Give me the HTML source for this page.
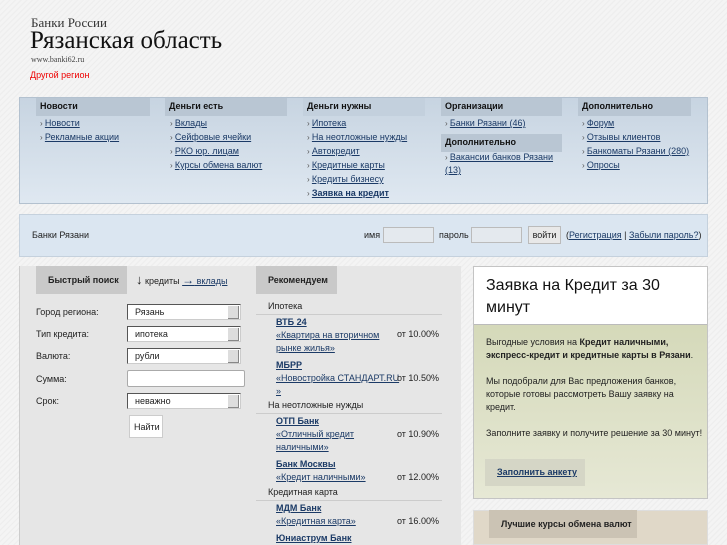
<!DOCTYPE html>
<html><head><meta charset="utf-8"><style>
*{margin:0;padding:0;box-sizing:border-box}
body{width:727px;height:545px;overflow:hidden;position:relative;font-family:"Liberation Sans","DejaVu Sans",sans-serif;font-size:9px;color:#222;
background:repeating-linear-gradient(135deg,#f4f4f4 0,#f4f4f4 2px,#ececec 3px,#f4f4f4 4px);}
.a{position:absolute}
a{color:#1b3a66;text-decoration:underline}
.h{position:absolute;top:98px;height:18px;background:#b9c6d3;font-weight:bold;font-size:9px;padding:3px 0 0 4px;color:#111}
.col{position:absolute;top:116px;font-size:9px}
.col div{height:14px;line-height:14px}
.col div:before{content:"› ";color:#555;font-size:8px}
.sel{position:absolute;left:127px;width:114px;height:16px;background:#fff;border:1px solid #555;border-right-color:#ccc;border-bottom-color:#ccc;padding:2px 0 0 7px;font-size:9px}
.sel:after{content:"";position:absolute;right:1px;top:1px;width:10px;height:12px;background:#ddd;border-right:1px solid #888;border-bottom:1px solid #888}
.lab{position:absolute;left:36px;font-size:9px}
.r{position:absolute;left:276px;font-size:9px;line-height:13px}
.p{position:absolute;left:397px;font-size:9px}
.cat{position:absolute;left:256px;width:186px;border-bottom:1px solid #ccc;padding-left:12px;font-size:9px;height:14px}
</style></head><body>
<div class="a" style="left:31px;top:15px;font-family:'Liberation Serif',serif;font-size:13px;color:#333">Банки России</div>
<div class="a" style="left:30px;top:27px;font-family:'Liberation Serif',serif;font-size:25px;color:#111">Рязанская область</div>
<div class="a" style="left:31px;top:55px;font-family:'Liberation Serif',serif;font-size:8px;color:#444">www.banki62.ru</div>
<div class="a" style="left:30px;top:70px;font-size:9px;color:#e00">Другой регион</div>

<div class="a" style="left:19px;top:97px;width:689px;height:107px;border:1px solid #b3c1cf;background:linear-gradient(#c7d4e1,#dfe8f1)"></div>
<div class="h" style="left:36px;width:114px">Новости</div>
<div class="h" style="left:165px;width:122px">Деньги есть</div>
<div class="h" style="left:303px;width:122px;background:#c3d0dd">Деньги нужны</div>
<div class="h" style="left:441px;width:121px">Организации</div>
<div class="h" style="left:578px;width:113px">Дополнительно</div>
<div class="col" style="left:40px"><div><a>Новости</a></div><div><a>Рекламные акции</a></div></div>
<div class="col" style="left:170px"><div><a>Вклады</a></div><div><a>Сейфовые ячейки</a></div><div><a>РКО юр. лицам</a></div><div><a>Курсы обмена валют</a></div></div>
<div class="col" style="left:307px"><div><a>Ипотека</a></div><div><a>На неотложные нужды</a></div><div><a>Автокредит</a></div><div><a>Кредитные карты</a></div><div><a>Кредиты бизнесу</a></div><div><a style="font-weight:bold">Заявка на кредит</a></div></div>
<div class="col" style="left:445px"><div><a>Банки Рязани (46)</a></div></div>
<div class="h" style="left:441px;top:134px;width:121px">Дополнительно</div>
<div class="a" style="left:445px;top:151px;width:120px;line-height:13px"><span style="color:#555;font-size:8px">› </span><a>Вакансии банков Рязани (13)</a></div>
<div class="col" style="left:582px"><div><a>Форум</a></div><div><a>Отзывы клиентов</a></div><div><a>Банкоматы Рязани (280)</a></div><div><a>Опросы</a></div></div>

<div class="a" style="left:19px;top:214px;width:689px;height:43px;border:1px solid #c5d1dd;background:#dbe6f1"></div>
<div class="a" style="left:32px;top:230px">Банки Рязани</div>
<div class="a" style="left:364px;top:230px">имя</div>
<div class="a" style="left:383px;top:227px;width:51px;height:16px;background:#e4e9ee;border:1px solid #bbb"></div>
<div class="a" style="left:439px;top:230px">пароль</div>
<div class="a" style="left:471px;top:227px;width:51px;height:16px;background:#e4e9ee;border:1px solid #bbb"></div>
<div class="a" style="left:528px;top:226px;width:33px;height:18px;background:#e8e8e8;border:1px solid #bbb;text-align:center;padding-top:3px">войти</div>
<div class="a" style="left:566px;top:230px">(<a>Регистрация</a> | <a>Забыли пароль?</a>)</div>

<div class="a" style="left:19px;top:266px;width:442px;height:279px;background:#e6e6e6;border-left:1px solid #ccc"></div>
<div class="a" style="left:36px;top:266px;width:91px;height:28px;background:#c9c9c9;font-weight:bold;padding:9px 0 0 12px">Быстрый поиск</div>
<div class="a" style="left:136px;top:272px;font-size:9px"><b style="font-size:13px">↓</b> кредиты <a><b style="font-size:12px">→</b> вклады</a></div>
<div class="a" style="left:256px;top:266px;width:81px;height:28px;background:#c9c9c9;font-weight:bold;padding:9px 0 0 12px">Рекомендуем</div>
<div class="lab" style="top:307px">Город региона:</div>
<div class="lab" style="top:329px">Тип кредита:</div>
<div class="lab" style="top:351px">Валюта:</div>
<div class="lab" style="top:374px">Сумма:</div>
<div class="lab" style="top:396px">Срок:</div>
<div class="sel" style="top:304px">Рязань</div>
<div class="sel" style="top:326px">ипотека</div>
<div class="sel" style="top:348px">рубли</div>
<div class="a" style="left:127px;top:370px;width:118px;height:17px;background:#fff;border:1px solid #aaa;border-radius:2px"></div>
<div class="sel" style="top:393px">неважно</div>
<div class="a" style="left:129px;top:415px;width:34px;height:23px;background:#fff;border:1px solid #ccc;padding:6px 0 0 4px">Найти</div>

<div class="cat" style="top:301px">Ипотека</div>
<div class="r" style="top:316px"><b><a>ВТБ 24</a></b><br><a>«Квартира на вторичном<br>рынке жилья»</a></div>
<div class="p" style="top:329px">от 10.00%</div>
<div class="r" style="top:359px"><b><a>МБРР</a></b><br><a>«Новостройка СТАНДАРТ.RU<br>»</a></div>
<div class="p" style="top:373px">от 10.50%</div>
<div class="cat" style="top:400px">На неотложные нужды</div>
<div class="r" style="top:415px"><b><a>ОТП Банк</a></b><br><a>«Отличный кредит<br>наличными»</a></div>
<div class="p" style="top:429px">от 10.90%</div>
<div class="r" style="top:458px"><b><a>Банк Москвы</a></b><br><a>«Кредит наличными»</a></div>
<div class="p" style="top:472px">от 12.00%</div>
<div class="cat" style="top:487px">Кредитная карта</div>
<div class="r" style="top:502px"><b><a>МДМ Банк</a></b><br><a>«Кредитная карта»</a></div>
<div class="p" style="top:516px">от 16.00%</div>
<div class="r" style="top:532px"><b><a>Юниаструм Банк</a></b></div>

<div class="a" style="left:473px;top:266px;width:235px;height:233px;border:1px solid #c4c4c4;background:linear-gradient(#cfd4b0,#e6e8d5)"></div>
<div class="a" style="left:474px;top:267px;width:233px;height:58px;background:#fff;border-bottom:1px solid #bbb;padding:8px 40px 0 12px;font-size:16px;line-height:22px;color:#111">Заявка на Кредит за 30 минут</div>
<div class="a" style="left:486px;top:336px;width:218px;font-size:9px;line-height:13px;color:#222">Выгодные условия на <b>Кредит наличными, экспресс-кредит и кредитные карты в Рязани</b>.<br><br>Мы подобрали для Вас предложения банков, которые готовы рассмотреть Вашу заявку на кредит.<br><br>Заполните заявку и получите решение за 30 минут!</div>
<div class="a" style="left:485px;top:459px;width:100px;height:27px;background:#d5d6c6;padding:8px 0 0 12px"><a style="font-weight:bold">Заполнить анкету</a></div>
<div class="a" style="left:473px;top:510px;width:235px;height:35px;background:#e0d8c8;border:1px solid #ddd"></div>
<div class="a" style="left:489px;top:510px;width:148px;height:28px;background:#cbc3b4;font-weight:bold;padding:9px 0 0 12px">Лучшие курсы обмена валют</div>
</body></html>
